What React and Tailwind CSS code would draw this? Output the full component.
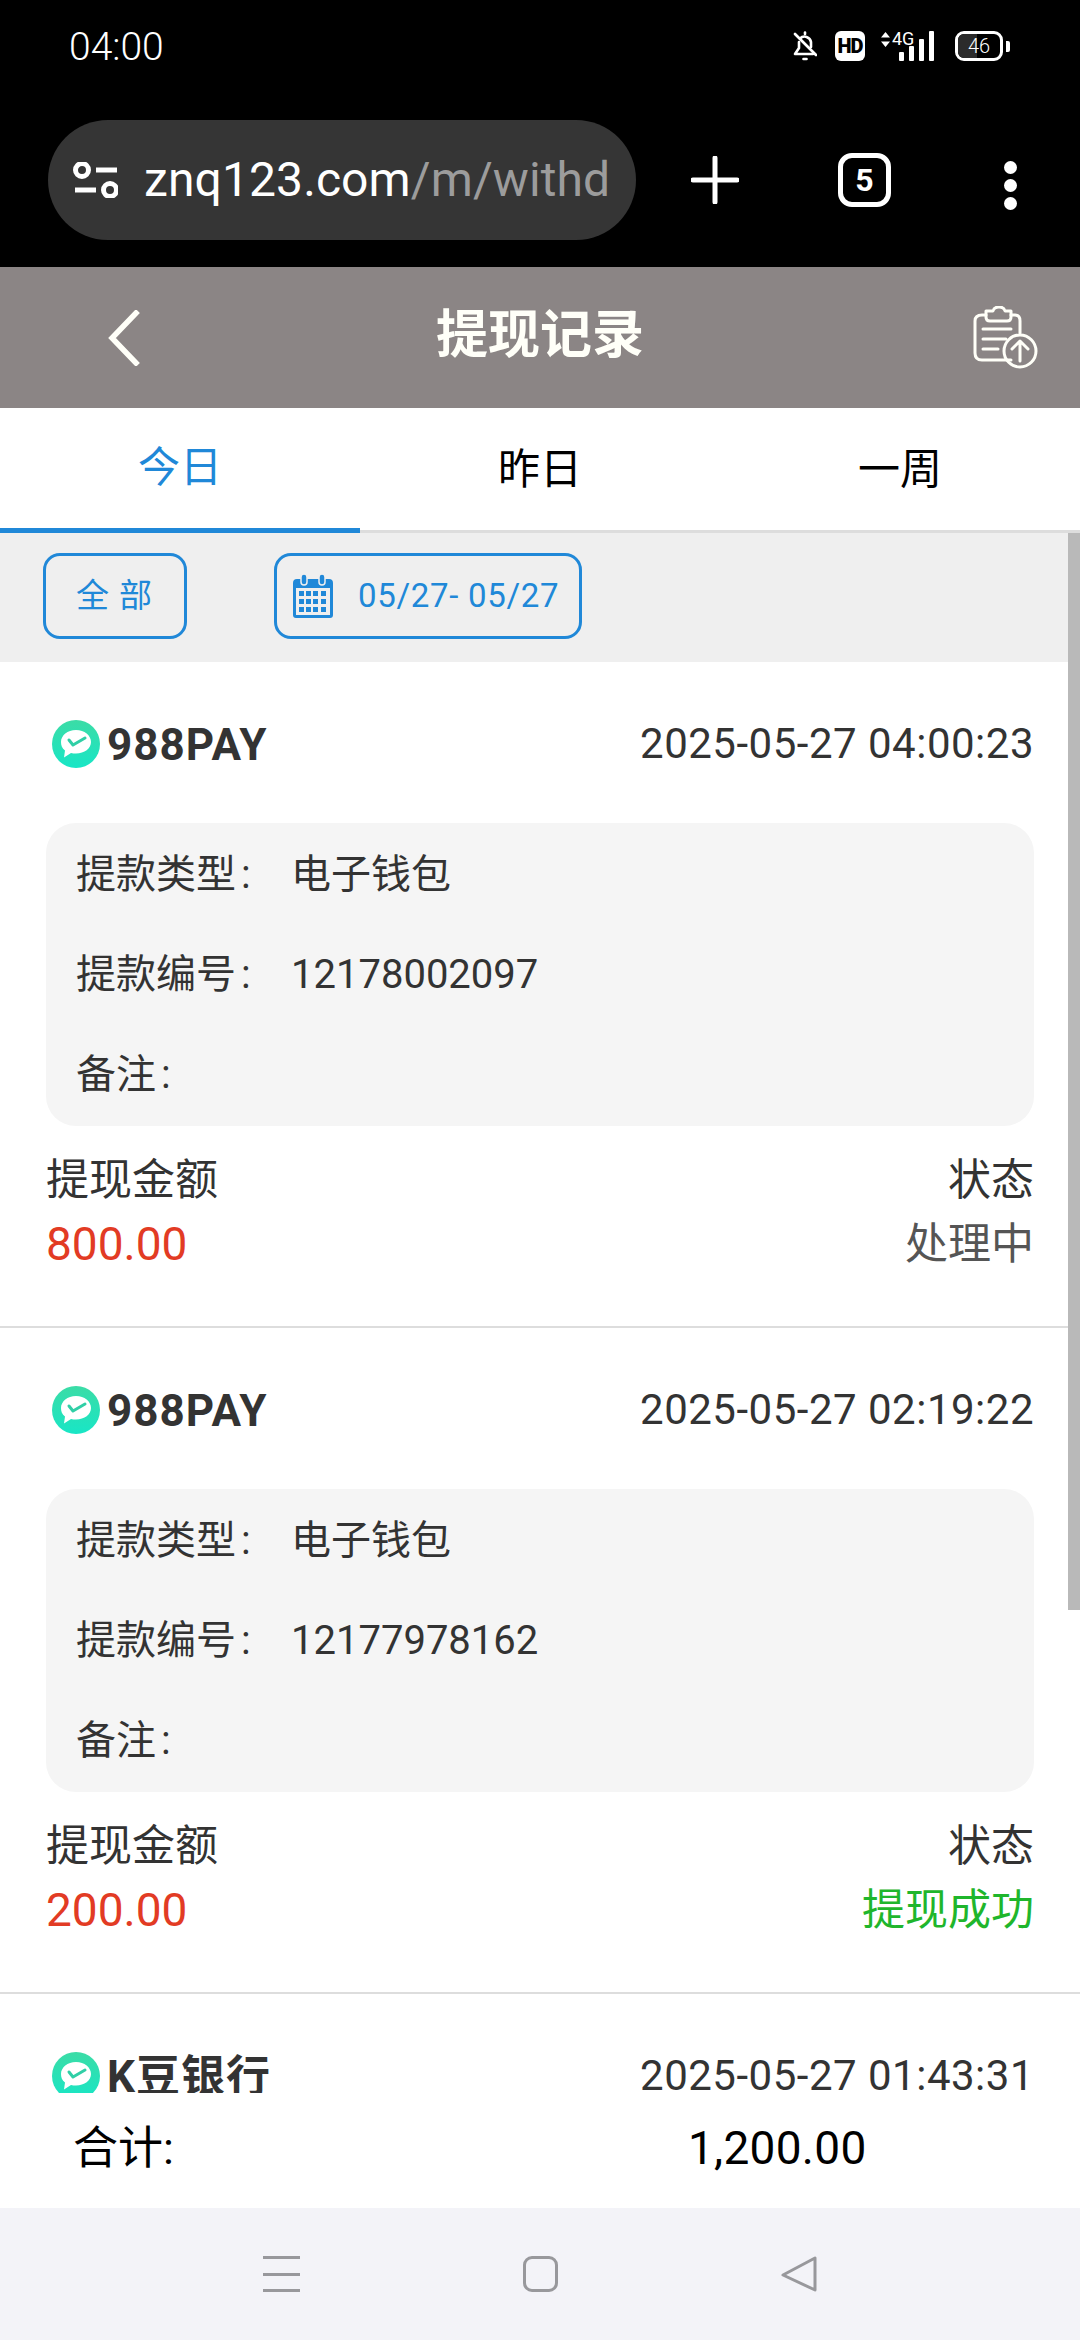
const FONT = { fontFamily: 'Roboto, "Noto Sans CJK SC", sans-serif' }

const records = [
  { bank: '988PAY', time: '2025-05-27 04:00:23', no: '12178002097', amount: '800.00', status: '处理中', statusClass: 'text-[#555555]' },
  { bank: '988PAY', time: '2025-05-27 02:19:22', no: '12177978162', amount: '200.00', status: '提现成功', statusClass: 'text-[#1fb62c]' },
  { bank: 'K豆银行', time: '2025-05-27 01:43:31' },
]

const BellMuted = () => (
  <svg width="24" height="30" viewBox="0 0 24 30" fill="none" stroke="white" strokeWidth="2.6" strokeLinejoin="round" strokeLinecap="round">
    <path d="M7 7.5 A6.5 6.5 0 0 1 18 11 V16" />
    <path d="M6 11 V17 L2 23 H20" />
    <path d="M2 3 L23 24" />
    <path d="M12 1.5 V3" />
    <path d="M10.5 28 H13.5" />
  </svg>
)

const SignalBars = () => (
  <div className="flex items-end gap-[5px] h-[30px]">
    <div className="w-[5px] h-[9px] bg-white rounded-[1px]" />
    <div className="w-[5px] h-[15px] bg-white rounded-[1px]" />
    <div className="w-[5px] h-[22px] bg-white rounded-[1px]" />
    <div className="w-[5px] h-[30px] bg-white rounded-[1px]" />
  </div>
)

const StatusBar = () => (
  <div className="h-[92px] flex items-center justify-between pl-[69px] pr-[70px] text-white">
    <span className="text-[39px] leading-none font-light mt-[2px]">04:00</span>
    <div className="flex items-center">
      <BellMuted />
      <div className="ml-[18px] w-[30px] h-[30px] bg-white rounded-[6px] flex items-center justify-center text-black text-[20px] font-black leading-none tracking-[-1px]">HD</div>
      <div className="relative ml-[16px] w-[53px] h-[30px]">
        <svg className="absolute left-0 top-[1px]" width="9" height="15" viewBox="0 0 9 15" fill="white">
          <path d="M4.5 0 L9 5.5 H0 Z M4.5 15 L0 9.5 H9 Z" />
        </svg>
        <span className="absolute left-[11px] -top-[1px] text-[18px] leading-[18px]">4G</span>
        <div className="absolute right-0 top-0"><SignalBars /></div>
      </div>
      <div className="ml-[21px] relative w-[48px] h-[30px] rounded-[9px] border-[3px] border-white overflow-hidden flex items-center justify-center">
        <div className="absolute left-0 top-0 bottom-0 w-[46%] bg-[#2b2b2b]" />
        <span className="relative text-[20px] leading-none font-light">46</span>
      </div>
      <div className="ml-[3px] w-[4px] h-[11px] bg-white rounded-r-[2px]" />
    </div>
  </div>
)

const BrowserBar = () => (
  <div className="h-[175px] flex pl-[48px] pt-[28px]">
    <div className="w-[588px] h-[120px] rounded-[60px] bg-[#353535] flex items-center pl-[24px] pr-[27px]">
      <svg className="shrink-0" width="46" height="36" viewBox="0 0 46 36" fill="none" stroke="white" strokeWidth="5">
        <circle cx="10" cy="8" r="6.5" />
        <path d="M24 8 H45" />
        <path d="M3 28 H24" />
        <circle cx="38" cy="28" r="6.5" />
      </svg>
      <div className="ml-[26px] text-[48px] leading-none whitespace-nowrap tracking-[0.1px]">
        <span className="text-white">znq123.com</span>
        <span className="text-[#9c9c9c]">/m/withd</span>
      </div>
    </div>
    <svg className="ml-[55px] mt-[36px]" width="48" height="48" viewBox="0 0 48 48" stroke="white" strokeWidth="5" strokeLinecap="round">
      <path d="M24 2 V46 M2 24 H46" />
    </svg>
    <div className="ml-[99px] mt-[33px] w-[53px] h-[54px] rounded-[14px] border-[5px] border-white flex items-center justify-center text-white text-[32px] font-bold leading-none">5</div>
    <div className="ml-[113px] mt-[41px] flex flex-col gap-[5px]">
      <div className="w-[13px] h-[13px] rounded-full bg-white" />
      <div className="w-[13px] h-[13px] rounded-full bg-white" />
      <div className="w-[13px] h-[13px] rounded-full bg-white" />
    </div>
  </div>
)

const ClipboardUp = () => (
  <svg width="66" height="64" viewBox="0 0 66 64" fill="none" stroke="#fffff8" strokeWidth="3" strokeLinecap="round" strokeLinejoin="round">
    <path d="M38 54 H9 Q2 54 2 47 V15 Q2 9 9 9 H13" />
    <path d="M38 9 H42 Q47 9 47 15 V27" />
    <path d="M13 5 H20 Q21 1 26 1 Q31 1 32 5 H38 V11 Q38 15 34 15 H17 Q13 15 13 11 Z" />
    <path d="M10 23 H38 M10 33 H33 M10 43 H25" />
    <circle cx="47" cy="45" r="16" />
    <path d="M47 55 V36 M39 43 L47 35 L55 43" />
  </svg>
)

const PageHeader = () => (
  <div className="h-[141px] bg-[#8b8585] flex items-center pl-[108px] pr-[41px]">
    <div className="flex-1">
      <svg width="32" height="56" viewBox="0 0 32 56" fill="none" stroke="#fffff8" strokeWidth="5.5" strokeLinecap="square">
        <path d="M28 3 L4 28 L28 53" />
      </svg>
    </div>
    <h1 className="text-[52px] leading-none font-bold text-[#fffff8] -mt-[3px] -ml-[67px]">提现记录</h1>
    <div className="flex-1 flex justify-end">
      <ClipboardUp />
    </div>
  </div>
)

const Tabs = () => (
  <div className="h-[125px] grid grid-cols-3 border-b-[3px] border-[#dddddd] text-[42px] bg-white">
    <div className="h-[125px] flex items-center justify-center text-[#2088d8] border-b-[5px] border-[#2088d8] pb-[2px]">今日</div>
    <div className="flex items-center justify-center text-black pb-[2px]">昨日</div>
    <div className="flex items-center justify-center text-black pb-[2px]">一周</div>
  </div>
)

const CalendarIcon = () => (
  <svg width="40" height="44" viewBox="0 0 40 44">
    <path d="M2 5 H36 Q40 5 40 9 V41 Q40 44 37 44 H3 Q0 44 0 41 V9 Q0 5 4 5 Z" fill="#2088d8" />
    <rect x="3" y="14" width="34" height="27" fill="#efefef" />
    <rect x="8" y="0" width="6" height="11" rx="3" fill="#2088d8" stroke="#efefef" strokeWidth="1.5" />
    <rect x="26" y="0" width="6" height="11" rx="3" fill="#2088d8" stroke="#efefef" strokeWidth="1.5" />
    <g fill="#2088d8">
      <rect x="6" y="17" width="5" height="5" /><rect x="13" y="17" width="5" height="5" /><rect x="20" y="17" width="5" height="5" /><rect x="28" y="17" width="5" height="5" />
      <rect x="6" y="25" width="5" height="5" /><rect x="13" y="25" width="5" height="5" /><rect x="20" y="25" width="5" height="5" /><rect x="28" y="25" width="5" height="5" />
      <rect x="6" y="33" width="5" height="5" /><rect x="13" y="33" width="5" height="5" /><rect x="20" y="33" width="5" height="5" /><rect x="28" y="33" width="5" height="5" />
    </g>
  </svg>
)

const FilterBar = () => (
  <div className="h-[129px] bg-[#efefef] flex items-start pt-[20px] pl-[43px] text-[#2088d8]">
    <div className="w-[144px] h-[86px] border-[3px] border-[#2088d8] rounded-[17px] flex items-center justify-center text-[33px] tracking-[10px] pl-[8px]">全部</div>
    <div className="ml-[87px] w-[308px] h-[86px] border-[3px] border-[#2088d8] rounded-[17px] flex items-center pl-[16px]">
      <CalendarIcon />
      <span className="ml-[25px] text-[33px] leading-none whitespace-nowrap tracking-[0.7px] -mt-[2px]">05/27- 05/27</span>
    </div>
  </div>
)

const BankLogo = () => (
  <svg width="48" height="48" viewBox="0 0 48 48">
    <defs>
      <linearGradient id="bankLogoFill" x1="0" y1="0" x2="0" y2="1">
        <stop offset="0" stopColor="#3bdca6" />
        <stop offset="1" stopColor="#18e6c6" />
      </linearGradient>
    </defs>
    <circle cx="24" cy="24" r="24" fill="url(#bankLogoFill)" />
    <path d="M24 10 C32.5 10 39 15.5 39 22 C39 28.5 32.5 33.5 24 33.5 C22 33.5 20.5 33.3 19 32.9 L12 37.5 L13 30.5 C10 28.5 9 25.5 9 22 C9 15.5 15.5 10 24 10 Z" fill="white" />
    <path d="M17 20 L21 25 L33 18" fill="none" stroke="#30cfa6" strokeWidth="3" strokeLinecap="round" strokeLinejoin="round" />
  </svg>
)

const InfoRow = ({ label, value }) => (
  <div className="h-[100px] flex items-center pl-[30px] pt-[3px] text-[40px] text-[#333333]">
    <span className="w-[215px] shrink-0">
      {label}
      <span className="ml-[5px]">:</span>
    </span>
    {value && <span>{value}</span>}
  </div>
)

const RecordCard = ({ record }) => (
  <div className="px-[46px] pt-[55px] pb-[50px] border-b-2 border-[#dddddd] bg-white">
    <div className="h-[54px] flex items-center justify-between">
      <div className="flex items-center pl-[6px]">
        <BankLogo />
        <span className="ml-[7px] mt-[2px] text-[44px] leading-none font-bold text-[#333333] tracking-[1px]">{record.bank}</span>
      </div>
      <span className="text-[42px] leading-none text-[#333333] tracking-[0.5px]">{record.time}</span>
    </div>
    {record.no && (
      <>
        <div className="mt-[52px] h-[303px] rounded-[30px] bg-[#f5f5f5]">
          <InfoRow label="提款类型" value="电子钱包" />
          <InfoRow label="提款编号" value={record.no} />
          <InfoRow label="备注" />
        </div>
        <div className="mt-[22px] flex justify-between text-[43px] leading-[64px] text-[#333333]">
          <div>
            <div>提现金额</div>
            <div className="text-[#e23b24] text-[46px]">{record.amount}</div>
          </div>
          <div className="text-right">
            <div>状态</div>
            <div className={record.statusClass}>{record.status}</div>
          </div>
        </div>
      </>
    )}
  </div>
)

const NavBar = () => (
  <div className="h-[132px] bg-[#f3f3f8] flex items-start pt-[48px] pl-[263px]">
    <div className="w-[37px] h-[36px] flex flex-col justify-between">
      <div className="h-[3px] bg-[#98989c]" />
      <div className="h-[3px] bg-[#98989c]" />
      <div className="h-[3px] bg-[#98989c]" />
    </div>
    <div className="ml-[223px] w-[35px] h-[36px] rounded-[9px] border-[3px] border-[#98989c]" />
    <svg className="ml-[223px]" width="36" height="36" viewBox="0 0 36 36" fill="none" stroke="#98989c" strokeWidth="3" strokeLinejoin="round">
      <path d="M34 2 V34 L2 19 Z" />
    </svg>
  </div>
)

export default function App() {
  return (
    <div className="w-[1080px] h-[2340px] flex flex-col overflow-hidden bg-black" style={FONT}>
      <StatusBar />
      <BrowserBar />
      <PageHeader />
      <Tabs />
      <div className="relative flex-1 overflow-hidden bg-white">
        <FilterBar />
        {records.map((r) => (
          <RecordCard key={r.time} record={r} />
        ))}
        {/* scroll thumb sits over the list */}
        <div className="absolute right-0 top-0 w-[12px] h-[1077px] bg-[#b9b9b9]" />
        {/* total stays pinned above the nav bar */}
        <div className="absolute left-0 right-0 bottom-0 h-[115px] bg-white flex items-center text-black text-[45px] leading-none pb-[5px]">
          <span className="ml-[73px]">合计:</span>
          <span className="ml-[514px] text-[46px] tracking-[0.3px]">1,200.00</span>
        </div>
      </div>
      <NavBar />
    </div>
  )
}
